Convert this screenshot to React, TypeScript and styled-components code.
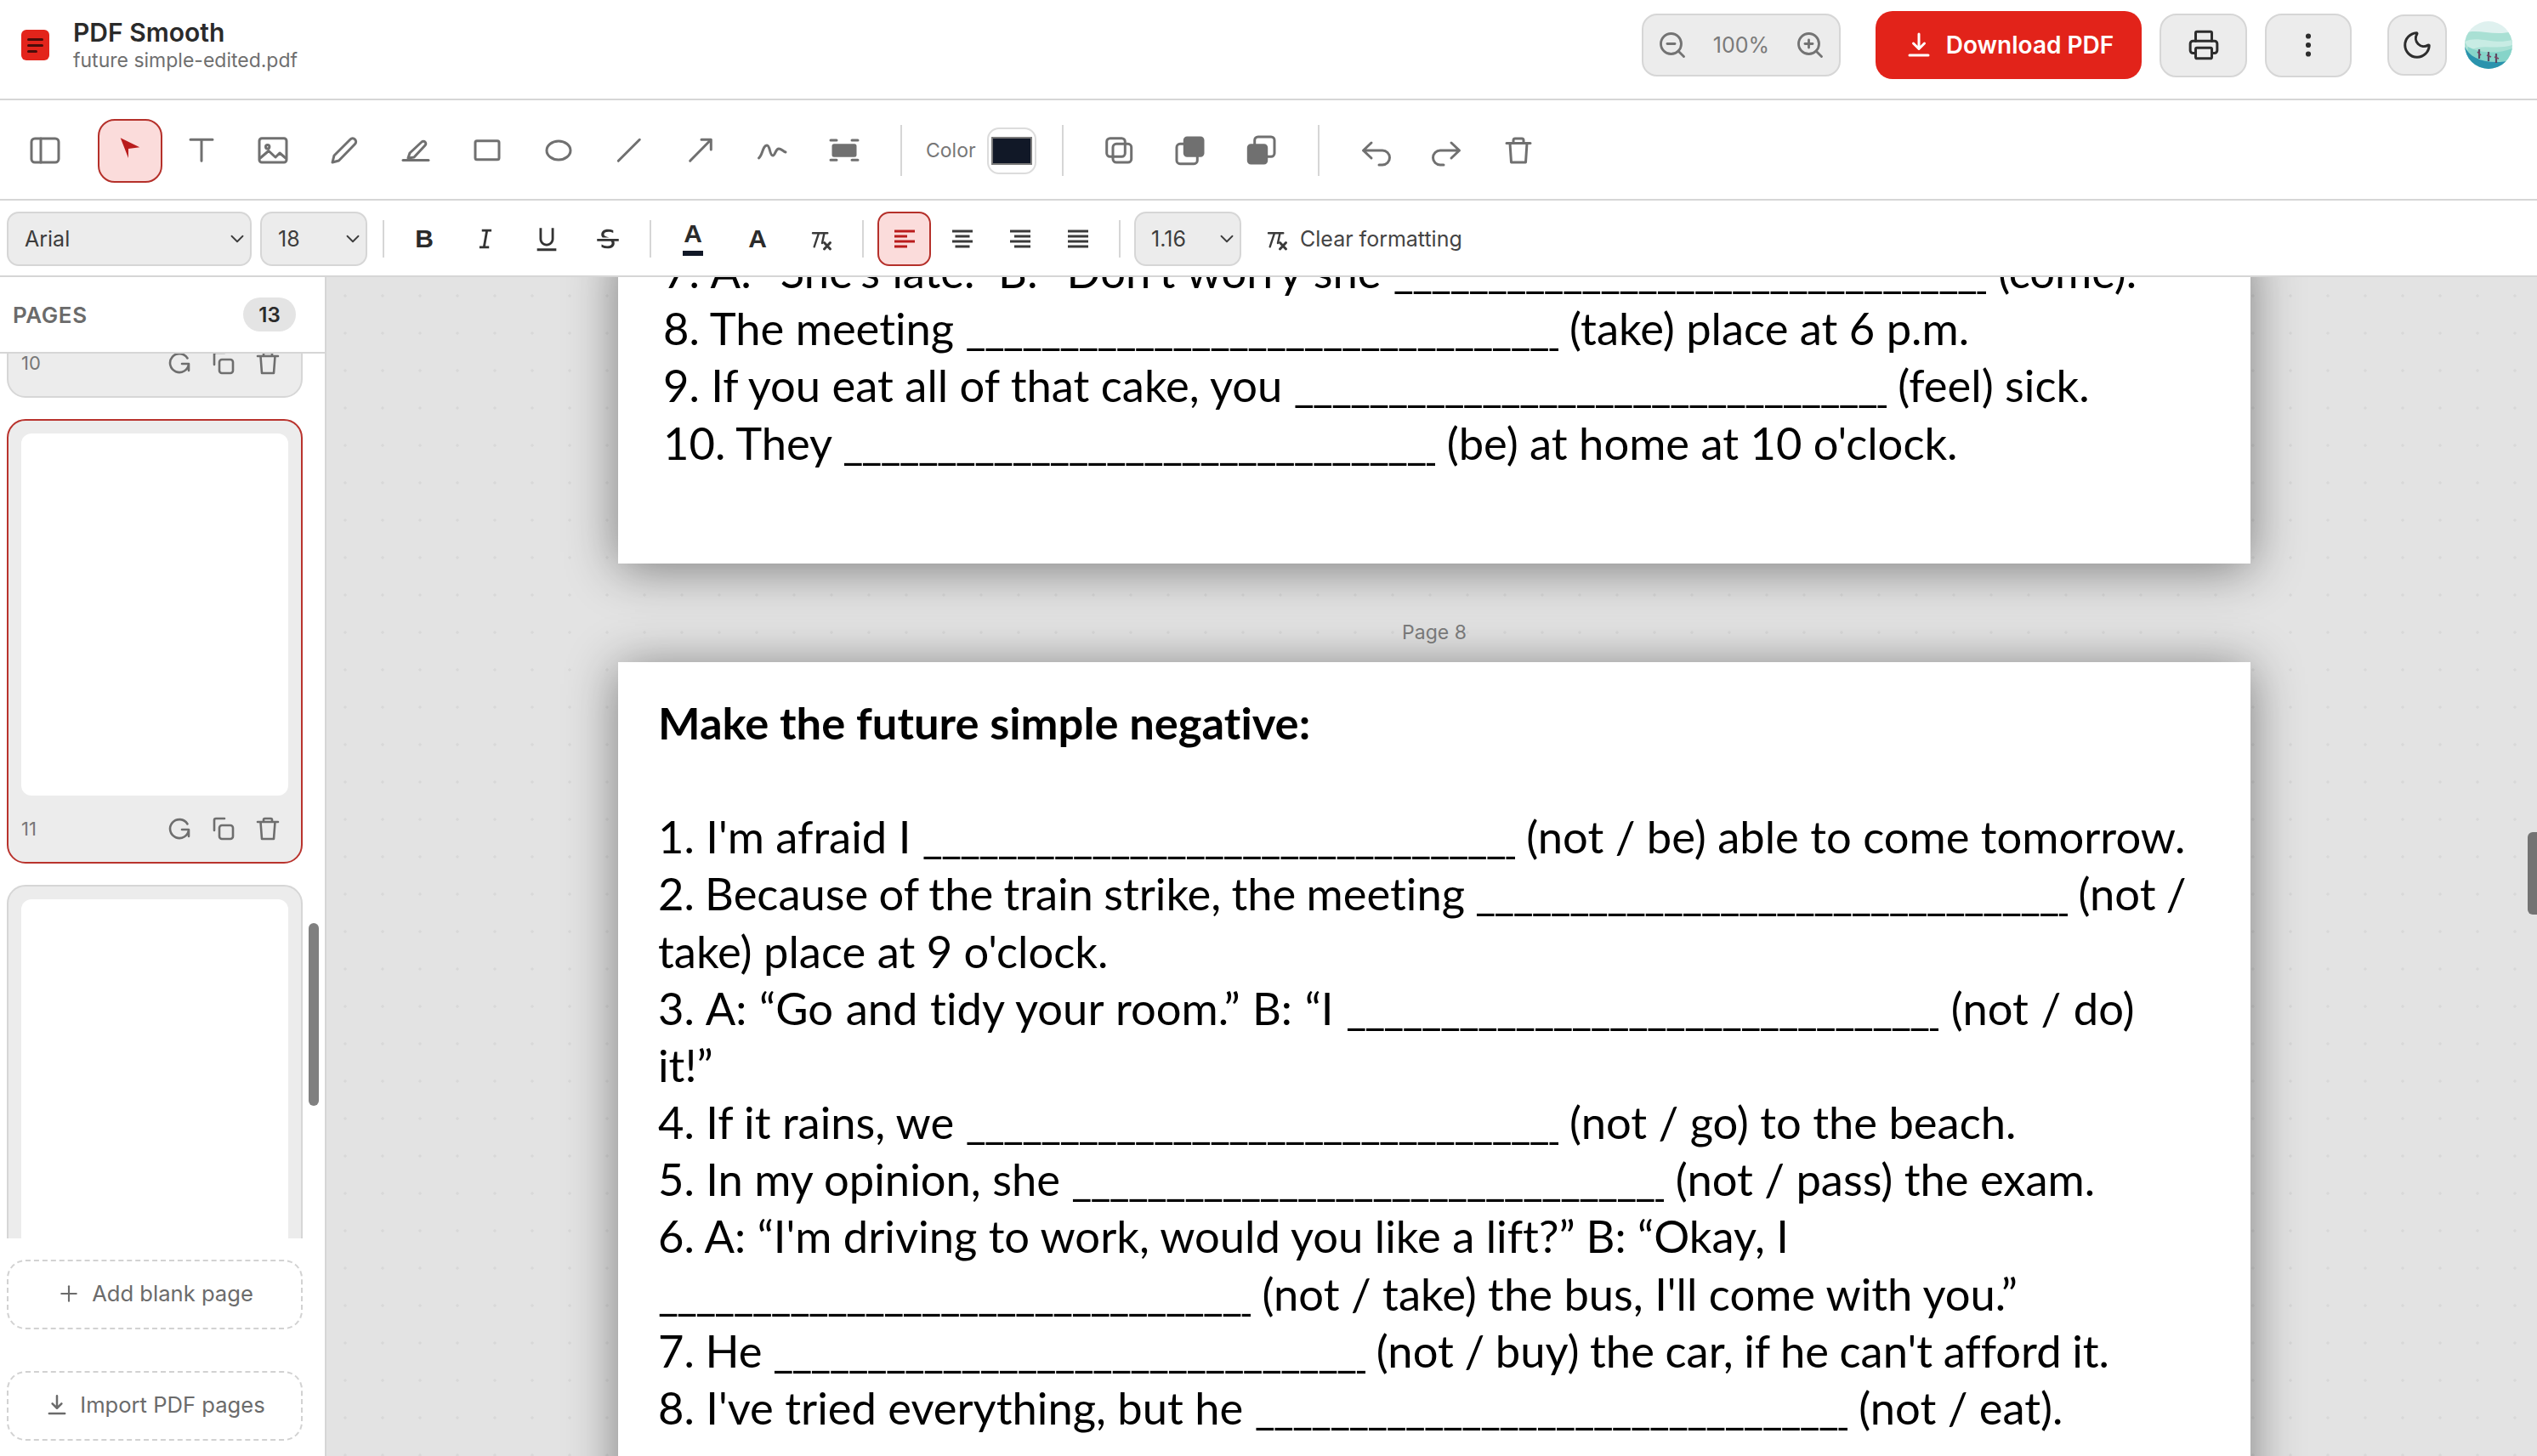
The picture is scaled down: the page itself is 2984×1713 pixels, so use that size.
import React from "react";
import styled, { createGlobalStyle } from "styled-components";
import { ChevronDown, Moon, MoreVertical, Plus, Printer, ZoomIn, ZoomOut } from "lucide-react";
import { RiItalic, RiStrikethrough, RiUnderline } from "react-icons/ri";

const GlobalStyle = createGlobalStyle`
  html, body {
    margin: 0;
    height: 100%;
    overflow: hidden;
    background: #fff;
    font-family: Inter, "Liberation Sans", sans-serif;
  }
  * { box-sizing: border-box; }
`;

const blank = "_".repeat(32);

const Blank = () => <BlankRun>{blank}</BlankRun>;

const App = () => {
  return (
    <Shell>
      <GlobalStyle />
      <Header>
        <Brand>
          <Logo>
            <LogoLine $w={19} />
            <LogoLine $w={19} />
            <LogoLine $w={12} />
          </Logo>
          <BrandText>
            <AppName>PDF Smooth</AppName>
            <FileName>future simple-edited.pdf</FileName>
          </BrandText>
        </Brand>
        <HeaderActions>
          <ZoomGroup>
            <ZoomOut size={36} strokeWidth={1.9} />
            <ZoomValue>100%</ZoomValue>
            <ZoomIn size={36} strokeWidth={1.9} />
          </ZoomGroup>
          <DownloadButton>
            <DownloadIcon size={36} />
            Download PDF
          </DownloadButton>
          <GreyButton $w={103} $mr={21}>
            <Printer size={38} strokeWidth={1.9} />
          </GreyButton>
          <GreyButton $w={102} $mr={42}>
            <MoreVertical size={36} strokeWidth={2.1} />
          </GreyButton>
          <GreyButton $w={70} $h={72} $mr={21}>
            <Moon size={38} strokeWidth={1.9} />
          </GreyButton>
          <Avatar />
        </HeaderActions>
      </Header>

      <Toolbar>
        <ToolButton $mr={16}>
          <ToolSvg viewBox="0 0 48 48">
            <rect x="8" y="10" width="32" height="28" rx="4" />
            <path d="M19 10V38" />
          </ToolSvg>
        </ToolButton>
        <ToolButton $active>
          <ToolSvg viewBox="0 0 48 48">
            <path d="M12.7 9.3L35.3 20.3L22 22L22 33Z" fill="#b91c1c" stroke="none" />
          </ToolSvg>
        </ToolButton>
        <ToolButton>
          <ToolSvg viewBox="0 0 48 48">
            <path d="M11 11.3H37M24 11.3V36.3" />
          </ToolSvg>
        </ToolButton>
        <ToolButton>
          <ToolSvg viewBox="0 0 48 48">
            <rect x="8" y="9.7" width="32" height="28.3" rx="3" />
            <circle cx="17.7" cy="19.7" r="2.2" />
            <path d="M9 33L19 24.5L27 32L32 27L39 33" />
          </ToolSvg>
        </ToolButton>
        <ToolButton>
          <ToolSvg viewBox="0 0 48 48">
            <path d="M10 38L12 30L31 11A3.7 3.7 0 0 1 36.5 16.5L17.5 36Z" />
          </ToolSvg>
        </ToolButton>
        <ToolButton>
          <ToolSvg viewBox="0 0 48 48">
            <path d="M15 33L17 27L31 14A2.8 2.8 0 0 1 35 18L22 32Z" />
            <path d="M9 35.5H39" />
          </ToolSvg>
        </ToolButton>
        <ToolButton>
          <ToolSvg viewBox="0 0 48 48">
            <rect x="10" y="12.7" width="28" height="22" rx="2" />
          </ToolSvg>
        </ToolButton>
        <ToolButton>
          <ToolSvg viewBox="0 0 48 48">
            <ellipse cx="24" cy="24" rx="14" ry="11" />
          </ToolSvg>
        </ToolButton>
        <ToolButton>
          <ToolSvg viewBox="0 0 48 48">
            <path d="M10.3 36.3L35.3 11.3" />
          </ToolSvg>
        </ToolButton>
        <ToolButton>
          <ToolSvg viewBox="0 0 48 48">
            <path d="M10.7 36.3L35.3 11.3M24 11.3H35.3V23" />
          </ToolSvg>
        </ToolButton>
        <ToolButton>
          <ToolSvg viewBox="0 0 48 48">
            <path d="M7.5 33C12 30 12 18 17 18C21 18 20 30 24 30C27 30 27 22 31 22C34 22 36 25 39 26" />
          </ToolSvg>
        </ToolButton>
        <ToolButton>
          <ToolSvg viewBox="0 0 48 48">
            <rect x="11" y="17.7" width="26" height="12.6" rx="1" fill="#707070" />
            <path d="M8 12H15M33 12H40M8 35.3H15M33 35.3H40" />
          </ToolSvg>
        </ToolButton>

        <ToolDivider />
        <ColorLabel>Color</ColorLabel>
        <Swatch>
          <SwatchFill />
        </Swatch>
        <ToolDivider $ml={30} $mr={27} />

        <ToolButton>
          <ToolSvg viewBox="0 0 48 48">
            <rect x="9.7" y="9.7" width="21.6" height="21.6" rx="4" />
            <rect x="17" y="16.3" width="21.7" height="21.7" rx="4" />
          </ToolSvg>
        </ToolButton>
        <ToolButton>
          <ToolSvg viewBox="0 0 48 48">
            <rect x="8" y="16.3" width="24.3" height="23.4" rx="4" />
            <rect x="17.3" y="9" width="21.7" height="21.3" rx="3" fill="#707070" />
          </ToolSvg>
        </ToolButton>
        <ToolButton>
          <ToolSvg viewBox="0 0 48 48">
            <rect x="15.7" y="8" width="23.3" height="23.3" rx="4" />
            <rect x="8.3" y="17.7" width="21.4" height="21.3" rx="3" fill="#707070" />
          </ToolSvg>
        </ToolButton>

        <ToolDivider />

        <ToolButton>
          <ToolSvg viewBox="0 0 48 48">
            <path d="M19 15L9.5 24L19 33M9.5 24H32A8.5 8.5 0 0 1 32 41H28" />
          </ToolSvg>
        </ToolButton>
        <ToolButton>
          <ToolSvg viewBox="0 0 48 48">
            <path d="M29 15L38.5 24L29 33M38.5 24H16A8.5 8.5 0 0 0 16 41H20" />
          </ToolSvg>
        </ToolButton>
        <ToolButton>
          <ToolSvg viewBox="0 0 48 48">
            <path d="M10 15.5H38M18 15V12A2 2 0 0 1 20 10H28A2 2 0 0 1 30 12V15M14 15.5L15.5 38H32.5L34 15.5" />
          </ToolSvg>
        </ToolButton>
      </Toolbar>

      <FormatBar>
        <SelectBox $w={288} $pad={19}>
          Arial
          <ChevronDown size={26} strokeWidth={1.7} />
        </SelectBox>
        <SelectBox $w={126} $ml={10} $pad={19}>
          18
          <ChevronDown size={26} strokeWidth={1.7} />
        </SelectBox>
        <FormatDivider $ml={18} $mr={15} />

        <FormatButton>
          <BoldGlyph>B</BoldGlyph>
        </FormatButton>
        <FormatButton>
          <RiItalic size={34} />
        </FormatButton>
        <FormatButton>
          <RiUnderline size={34} />
        </FormatButton>
        <FormatButton $mr={0}>
          <RiStrikethrough size={34} />
        </FormatButton>
        <FormatDivider $ml={17} $mr={17} />

        <FormatButton $mr={12}>
          <ColorGlyph>
            A
            <ColorBar />
          </ColorGlyph>
        </FormatButton>
        <FormatButton $mr={11}>
          <BoldGlyph>A</BoldGlyph>
        </FormatButton>
        <FormatButton $mr={0}>
          <ClearIcon />
        </FormatButton>
        <FormatDivider $ml={16} $mr={16} />

        <AlignButton $active>
          <AlignIcon widths={[24, 15, 24, 15]} align="left" color="#b91c1c" />
        </AlignButton>
        <AlignButton>
          <AlignIcon widths={[24, 17, 24, 17]} align="center" color="#3a3a3a" />
        </AlignButton>
        <AlignButton>
          <AlignIcon widths={[24, 19, 24, 19]} align="right" color="#3a3a3a" />
        </AlignButton>
        <AlignButton>
          <AlignIcon widths={[24, 24, 24, 24]} align="left" color="#3a3a3a" />
        </AlignButton>
        <FormatDivider $ml={12} $mr={16} />

        <SelectBox $w={126} $pad={18}>
          1.16
          <ChevronDown size={26} strokeWidth={1.7} />
        </SelectBox>
        <ClearButton>
          <ClearIcon />
          Clear formatting
        </ClearButton>
      </FormatBar>

      <Workspace>
        <Sidebar>
          <PagesHeader>
            <PagesTitle>PAGES</PagesTitle>
            <PagesCount>13</PagesCount>
          </PagesHeader>
          <PageList>
            <PageListInner>
              <PageCard n={10} />
              <PageCard n={11} active />
              <PageCard n={12} />
            </PageListInner>
            <ListThumb />
          </PageList>
          <SideActions>
            <DashedButton>
              <Plus size={30} strokeWidth={1.7} />
              Add blank page
            </DashedButton>
            <DashedButton>
              <DownloadIcon size={30} />
              Import PDF pages
            </DashedButton>
          </SideActions>
        </Sidebar>

        <Canvas>
          <PageStack>
            <PdfPage $first>
              <Line $x={6} $ws={1}>
                7. A: “She's late.” B: “Don't worry she <Blank /> (come).”
              </Line>
              <Line $x={6}>
                8. The meeting <Blank /> (take) place at 6 p.m.
              </Line>
              <Line $x={6}>
                9. If you eat all of that cake, you <Blank /> (feel) sick.
              </Line>
              <Line $x={6}>
                10. They <Blank /> (be) at home at 10 o'clock.
              </Line>
            </PdfPage>
            <PageLabel>Page 8</PageLabel>
            <PdfPage>
              <Heading>Make the future simple negative:</Heading>
              <Line>&nbsp;</Line>
              <Line>
                1. I'm afraid I <Blank /> (not / be) able to come tomorrow.
              </Line>
              <Line $ws={-1.2}>
                2. Because of the train strike, the meeting <Blank /> (not /
              </Line>
              <Line>take) place at 9 o'clock.</Line>
              <Line $ws={1.2}>
                3. A: “Go and tidy your room.” B: “I <Blank /> (not / do)
              </Line>
              <Line>it!”</Line>
              <Line>
                4. If it rains, we <Blank /> (not / go) to the beach.
              </Line>
              <Line>
                5. In my opinion, she <Blank /> (not / pass) the exam.
              </Line>
              <Line>6. A: “I'm driving to work, would you like a lift?” B: “Okay, I</Line>
              <Line>
                <Blank /> (not / take) the bus, I'll come with you.”
              </Line>
              <Line $ws={-0.8}>
                7. He <Blank /> (not / buy) the car, if he can't afford it.
              </Line>
              <Line>
                8. I've tried everything, but he <Blank /> (not / eat).
              </Line>
            </PdfPage>
          </PageStack>
          <CanvasThumb />
        </Canvas>
      </Workspace>
    </Shell>
  );
};

export default App;

const PageCard = ({ n, active }: { n: number; active?: boolean }) => (
  <Card $active={active}>
    <Thumb />
    <CardRow>
      <CardNumber>{n}</CardNumber>
      <CardIcons>
        <CardSvg viewBox="0 0 32 32">
          <path d="M25.5 10.5A11 11 0 1 0 27 17M27 25V17H19" />
        </CardSvg>
        <CardSvg viewBox="0 0 32 32">
          <rect x="11" y="12" width="16" height="16" rx="3" />
          <path d="M5 18V6A2 2 0 0 1 7 4H17" />
        </CardSvg>
        <CardSvg viewBox="0 0 32 32">
          <path d="M4 8H28M11 8V5.5A1.5 1.5 0 0 1 12.5 4H19.5A1.5 1.5 0 0 1 21 5.5V8M7.5 8L9 28H23L24.5 8" />
        </CardSvg>
      </CardIcons>
    </CardRow>
  </Card>
);

const DownloadIcon = ({ size }: { size: number }) => (
  <svg width={size} height={size} viewBox="0 0 36 36" fill="none" stroke="currentColor" strokeWidth="3" strokeLinecap="round" strokeLinejoin="round">
    <path d="M18 5V22M11.5 16L18 22.5L24.5 16M7 30H29" />
  </svg>
);

const ClearIcon = () => (
  <svg width="40" height="40" viewBox="0 0 40 40" fill="none" stroke="#3a3a3a" strokeLinecap="round">
    <path d="M10 13.3H27.3M17 13.3L11.7 29.3M23.5 13.3L21 25" strokeWidth="2.4" />
    <path d="M23.5 24.5L30.5 32M30.5 24.5L23.5 32" strokeWidth="3" />
  </svg>
);

const AlignIcon = ({ widths, align, color }: { widths: number[]; align: "left" | "center" | "right"; color: string }) => (
  <svg width="32" height="32" viewBox="0 0 32 32" fill="none" stroke={color} strokeWidth="3">
    {widths.map((w, i) => {
      const x = align === "left" ? 4 : align === "right" ? 28 - w : 16 - w / 2;
      const y = 7 + i * 6;
      return <path key={i} d={`M${x} ${y}H${x + w}`} />;
    })}
  </svg>
);

const Avatar = () => (
  <AvatarSvg viewBox="0 0 56 56">
    <defs>
      <clipPath id="avatar-clip">
        <circle cx="28" cy="28" r="28" />
      </clipPath>
    </defs>
    <g clipPath="url(#avatar-clip)">
      <rect width="56" height="56" fill="#dff1ef" />
      <path d="M0 14C14 8 34 18 56 12V40H0Z" fill="#a9e0d4" />
      <path d="M0 24C16 16 32 28 56 22V28C36 34 22 26 6 34Z" fill="#c8ece4" />
      <path d="M4 30C14 36 36 40 56 32V56H0Z" fill="#86d4c9" />
      <path d="M0 30C6 44 26 52 56 46V56H0Z" fill="#2a93ad" />
      <path d="M17 33V44M28 36V47M37 38V49" stroke="#5c4a63" strokeWidth="2.2" />
      <path d="M15 36L19 40M26 40L31 42M35 42L40 44" stroke="#7a4360" strokeWidth="1.6" />
    </g>
  </AvatarSvg>
);

const Shell = styled.div`
  width: 100vw;
  height: 100vh;
  display: flex;
  flex-direction: column;
  overflow: hidden;
`;

const Header = styled.header`
  height: 118px;
  flex: none;
  display: flex;
  align-items: center;
  justify-content: space-between;
  padding: 0 29px 10px 25px;
  background: #fff;
  border-bottom: 2px solid #d6d6d6;
`;

const Brand = styled.div`
  display: flex;
  align-items: center;
  gap: 28px;
`;

const Logo = styled.div`
  width: 33px;
  height: 36px;
  border-radius: 6px;
  background: #e3241b;
  display: flex;
  flex-direction: column;
  justify-content: center;
  gap: 4px;
  padding-left: 7px;
`;

const LogoLine = styled.span<{ $w: number }>`
  display: block;
  width: ${(p) => p.$w}px;
  height: 3px;
  border-radius: 2px;
  background: #4a0d0a;
`;

const BrandText = styled.div`
  display: flex;
  flex-direction: column;
`;

const AppName = styled.div`
  font-size: 30px;
  line-height: 36px;
  font-weight: 600;
  color: #2a2a2a;
`;

const FileName = styled.div`
  font-size: 23px;
  line-height: 30px;
  color: #6f6f6f;
`;

const HeaderActions = styled.div`
  display: flex;
  align-items: center;
`;

const ZoomGroup = styled.div`
  width: 234px;
  height: 74px;
  margin-right: 41px;
  display: flex;
  align-items: center;
  justify-content: space-between;
  padding: 0 16px;
  color: #737373;
  background: #ececec;
  border: 2px solid #d6d6d6;
  border-radius: 18px;
`;

const ZoomValue = styled.span`
  font-size: 25px;
  color: #7a7a7a;
`;

const DownloadButton = styled.button`
  width: 313px;
  height: 80px;
  margin-right: 21px;
  display: flex;
  align-items: center;
  justify-content: center;
  gap: 14px;
  background: #e2231a;
  border: none;
  border-radius: 20px;
  color: #fff;
  font-family: inherit;
  font-size: 28px;
  font-weight: 600;
`;

const GreyButton = styled.button<{ $w: number; $h?: number; $mr: number }>`
  width: ${(p) => p.$w}px;
  height: ${(p) => p.$h ?? 75}px;
  margin-right: ${(p) => p.$mr}px;
  padding: 0;
  display: flex;
  align-items: center;
  justify-content: center;
  color: #2d2d2d;
  background: #ececec;
  border: 2px solid #d6d6d6;
  border-radius: 20px;
`;

const AvatarSvg = styled.svg`
  width: 56px;
  height: 56px;
  flex: none;
`;

const Toolbar = styled.div`
  height: 118px;
  flex: none;
  display: flex;
  align-items: center;
  gap: 8px;
  padding: 2px 0 0 15px;
  background: #fff;
  border-bottom: 2px solid #d6d6d6;
`;

const ToolButton = styled.button<{ $active?: boolean; $mr?: number }>`
  width: 76px;
  height: 75px;
  flex: none;
  padding: 0;
  margin-right: ${(p) => p.$mr ?? 0}px;
  display: flex;
  align-items: center;
  justify-content: center;
  background: ${(p) => (p.$active ? "#fbdcdb" : "transparent")};
  border: ${(p) => (p.$active ? "2.5px solid #b5302a" : "none")};
  border-radius: 20px;
`;

const ToolSvg = styled.svg`
  width: 48px;
  height: 48px;
  fill: none;
  stroke: #707070;
  stroke-width: 3;
  stroke-linecap: round;
  stroke-linejoin: round;
`;

const ToolDivider = styled.span<{ $ml?: number; $mr?: number }>`
  width: 2px;
  height: 60px;
  flex: none;
  margin: 0 ${(p) => (p.$mr ?? 28) - 8}px 0 ${(p) => (p.$ml ?? 28) - 8}px;
  background: #d6d6d6;
`;

const ColorLabel = styled.span`
  width: 58px;
  margin-right: 6px;
  font-size: 23px;
  color: #777;
`;

const Swatch = styled.div`
  width: 58px;
  height: 55px;
  flex: none;
  padding: 9px 3px;
  background: #fff;
  border: 2px solid #dcdcdc;
  border-radius: 14px;
`;

const SwatchFill = styled.div`
  width: 100%;
  height: 100%;
  background: #111827;
  border: 2px solid #7a7a7a;
`;

const FormatBar = styled.div`
  height: 90px;
  flex: none;
  display: flex;
  align-items: center;
  padding: 1px 0 0 8px;
  background: #fff;
  border-bottom: 2px solid #d6d6d6;
`;

const SelectBox = styled.div<{ $w: number; $ml?: number; $pad?: number }>`
  width: ${(p) => p.$w}px;
  height: 64px;
  flex: none;
  margin-left: ${(p) => p.$ml ?? 0}px;
  padding: 0 2px 0 ${(p) => p.$pad ?? 20}px;
  display: flex;
  align-items: center;
  justify-content: space-between;
  font-size: 25px;
  color: #3c3c3c;
  background: #ececec;
  border: 2px solid #d6d6d6;
  border-radius: 14px;
`;

const FormatDivider = styled.span<{ $ml: number; $mr: number }>`
  width: 2px;
  height: 44px;
  flex: none;
  margin: 0 ${(p) => p.$mr}px 0 ${(p) => p.$ml}px;
  background: #d6d6d6;
`;

const FormatButton = styled.button<{ $mr?: number }>`
  width: 64px;
  height: 64px;
  flex: none;
  padding: 0;
  margin-right: ${(p) => p.$mr ?? 8}px;
  display: flex;
  align-items: center;
  justify-content: center;
  background: transparent;
  border: none;
  color: #333;
`;

const BoldGlyph = styled.span`
  font-size: 30px;
  line-height: 1;
  font-weight: 800;
  color: #2b2b2b;
`;

const ColorGlyph = styled.span`
  position: relative;
  top: -6px;
  font-size: 30px;
  line-height: 1;
  font-weight: 800;
  color: #2b2b2b;
`;

const ColorBar = styled.span`
  position: absolute;
  left: -1px;
  right: -1px;
  bottom: -11px;
  height: 6px;
  background: #111827;
`;

const AlignButton = styled.button<{ $active?: boolean }>`
  width: 63px;
  height: 64px;
  flex: none;
  padding: 0;
  margin-right: 5px;
  display: flex;
  align-items: center;
  justify-content: center;
  background: ${(p) => (p.$active ? "#fbdcdb" : "transparent")};
  border: ${(p) => (p.$active ? "2.5px solid #b5302a" : "none")};
  border-radius: 14px;
`;

const ClearButton = styled.button`
  display: flex;
  align-items: center;
  gap: 7px;
  margin-left: 22px;
  padding: 0;
  background: transparent;
  border: none;
  font-family: inherit;
  font-size: 25px;
  color: #444;
`;

const Workspace = styled.main`
  flex: 1;
  min-height: 0;
  display: flex;
`;

const Sidebar = styled.aside`
  width: 384px;
  flex: none;
  display: flex;
  flex-direction: column;
  background: #fff;
  border-right: 2px solid #d6d6d6;
`;

const PagesHeader = styled.div`
  height: 90px;
  flex: none;
  display: flex;
  align-items: center;
  justify-content: space-between;
  padding: 0 34px 0 15px;
  border-bottom: 2px solid #d6d6d6;
`;

const PagesTitle = styled.span`
  font-size: 26px;
  font-weight: 600;
  letter-spacing: 0.6px;
  color: #6b6b6b;
`;

const PagesCount = styled.span`
  width: 62px;
  height: 40px;
  display: flex;
  align-items: center;
  justify-content: center;
  font-size: 24px;
  font-weight: 600;
  color: #2b2b2b;
  background: #e4e4e4;
  border-radius: 20px;
`;

const PageList = styled.div`
  position: relative;
  height: 1041px;
  flex: none;
  overflow: hidden;
`;

const PageListInner = styled.div`
  display: flex;
  flex-direction: column;
  gap: 25px;
  width: 348px;
  margin: -471px 0 0 8px;
`;

const Card = styled.div<{ $active?: boolean }>`
  height: 523px;
  flex: none;
  padding: 15px 15px 0;
  background: #ececec;
  border: 2px solid ${(p) => (p.$active ? "#b9332d" : "#d6d6d6")};
  border-radius: 22px;
`;

const Thumb = styled.div`
  height: 426px;
  background: #fff;
  border-radius: 12px;
`;

const CardRow = styled.div`
  height: 40px;
  margin-top: 19px;
  display: flex;
  align-items: center;
  justify-content: space-between;
  padding-right: 8px;
`;

const CardNumber = styled.span`
  font-size: 22px;
  color: #777;
`;

const CardIcons = styled.div`
  display: flex;
  gap: 20px;
`;

const CardSvg = styled.svg`
  width: 32px;
  height: 32px;
  fill: none;
  stroke: #6e6e6e;
  stroke-width: 2.6;
  stroke-linecap: round;
  stroke-linejoin: round;
`;

const ListThumb = styled.div`
  position: absolute;
  top: 670px;
  left: 363px;
  width: 12px;
  height: 215px;
  border-radius: 6px;
  background: #808080;
`;

const SideActions = styled.div`
  display: flex;
  flex-direction: column;
  gap: 49px;
  padding: 25px 26px 0 8px;
`;

const DashedButton = styled.button`
  height: 82px;
  display: flex;
  align-items: center;
  justify-content: center;
  gap: 12px;
  padding: 0 0 3px;
  background: #fff;
  border: 2px dashed #d2d2d2;
  border-radius: 22px;
  font-family: inherit;
  font-size: 25.6px;
  color: #6b6b6b;
`;

const Canvas = styled.section`
  position: relative;
  flex: 1;
  min-width: 0;
  overflow: hidden;
  padding-left: 6px;
  background-color: #e3e3e3;
  background-image: radial-gradient(circle at center, #d8d8d8 1.4px, transparent 2px);
  background-size: 44px 44px;
`;

const PageStack = styled.div`
  display: flex;
  flex-direction: column;
  align-items: center;
  margin-top: -41px;
`;

const PdfPage = styled.article<{ $first?: boolean }>`
  width: 1920px;
  flex: none;
  padding: ${(p) => (p.$first ? "0 0 109px 47px" : "37px 0 400px 47px")};
  background: #fff;
  box-shadow: 0 6px 56px rgba(0, 0, 0, 0.45);
  font-family: Lato, "Open Sans", sans-serif;
  font-variant-ligatures: none;
  color: #000;
`;

const Line = styled.div<{ $x?: number; $ws?: number }>`
  height: 67.2px;
  line-height: 67.2px;
  padding-left: ${(p) => p.$x ?? 0}px;
  font-size: 52.5px;
  word-spacing: ${(p) => p.$ws ?? 0}px;
  white-space: nowrap;
`;

const Heading = styled.div`
  height: 67.2px;
  line-height: 67.2px;
  font-size: 52.5px;
  font-weight: 700;
  white-space: nowrap;
`;

const BlankRun = styled.span`
  display: inline-block;
  width: 697px;
  overflow: clip;
  white-space: nowrap;
  letter-spacing: -2px;
  vertical-align: baseline;
`;

const PageLabel = styled.div`
  height: 30px;
  margin: 66px 0 20px;
  font-family: Inter, "Liberation Sans", sans-serif;
  font-size: 23px;
  line-height: 30px;
  color: #7d7d7d;
`;

const CanvasThumb = styled.div`
  position: absolute;
  top: 653px;
  right: 0;
  width: 11px;
  height: 97px;
  border-radius: 6px 0 0 6px;
  background: #737373;
`;
